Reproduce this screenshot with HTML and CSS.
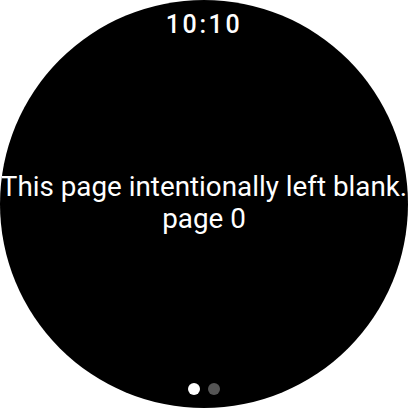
FILE: index.html
```html
<!DOCTYPE html>
<html>
<head>
<meta charset="utf-8">
<link rel="stylesheet" href="styles.css">
</head>
<body>
<div class="watch">
  <div class="time">10:10</div>
  <div class="message">This page intentionally left blank.<br>page 0</div>
  <div class="dots"><span class="dot active"></span><span class="dot"></span></div>
</div>
</body>
</html>
```
FILE: styles.css
```css
html, body {
  margin: 0;
  padding: 0;
  background: #fff;
}
.watch {
  width: 408px;
  height: 408px;
  border-radius: 50%;
  background: #000;
  overflow: hidden;
  display: grid;
  grid-template: 1fr / 1fr;
  font-family: Roboto, "Noto Sans", sans-serif;
  color: #fff;
}
.time, .message, .dots {
  grid-area: 1 / 1;
}
.time {
  align-self: start;
  justify-self: center;
  padding-top: 10px;
  font-size: 25px;
  font-weight: 500;
  letter-spacing: 2.6px;
  line-height: normal;
}
.message {
  align-self: center;
  justify-self: center;
  text-align: center;
  white-space: nowrap;
  font-size: 27.8px;
  line-height: 32px;
  padding-bottom: 2px;
}
.dots {
  align-self: end;
  justify-self: center;
  display: flex;
  gap: 8px;
  padding-bottom: 13px;
}
.dot {
  width: 12px;
  height: 12px;
  border-radius: 50%;
  background: #555;
}
.dot.active {
  background: #fff;
}
```
